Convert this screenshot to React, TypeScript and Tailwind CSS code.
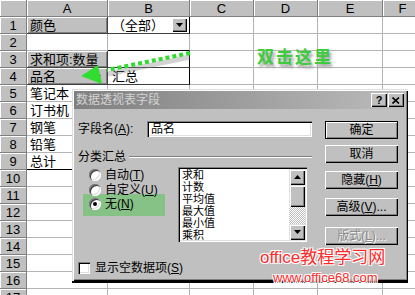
import type { ReactNode } from 'react';

const font = "font-['Liberation_Sans','Noto_Sans_CJK_SC',sans-serif]";

const colLetters = ['A', 'B', 'C', 'D', 'E', 'F'];
const colW = ['w-[81px]', 'w-[82px]', 'w-[64px]', 'w-[64px]', 'w-[65px]', 'w-[40px]'];

const aCells: Record<number, { text: string; gray?: boolean; arrow?: boolean }> = {
  1: { text: '颜色', gray: true },
  3: { text: '求和项:数量', gray: true },
  4: { text: '品名', gray: true, arrow: true },
  5: { text: '笔记本' },
  6: { text: '订书机' },
  7: { text: '钢笔' },
  8: { text: '铅笔' },
  9: { text: '总计' },
};

const listItems = ['求和', '计数', '平均值', '最大值', '最小值', '乘积'];

function DownTri({ className = '' }: { className?: string }) {
  return (
    <svg width="7" height="4" viewBox="0 0 7 4" className={className}>
      <polygon points="0,0 7,0 3.5,4" fill="#000" />
    </svg>
  );
}

function CellA({ n }: { n: number }) {
  const c = aCells[n];
  if (c?.gray) {
    return (
      <div className="relative flex w-[81px] shrink-0 items-center border-r border-b border-[#404040] bg-[#c0c0c0] pl-[3px] shadow-[inset_1px_1px_0_#fff,inset_-1px_-1px_0_#808080]">
        {c.text}
        {c.arrow && <DownTri className="absolute right-[6px] top-[7px]" />}
      </div>
    );
  }
  return (
    <div
      className={`flex w-[81px] shrink-0 items-center border-r border-b pl-[3px] ${
        n === 9 ? 'border-b-black border-r-[#b4b4b4]' : 'border-[#b4b4b4]'
      }`}
    >
      {c?.text}
    </div>
  );
}

function CellB({ n }: { n: number }) {
  const dark = n === 1 || n === 3 || n === 4;
  return (
    <div
      className={`relative flex w-[82px] shrink-0 items-center border-r border-b pl-[4px] ${
        dark ? 'border-r-black border-b-[#404040]' : 'border-[#b4b4b4]'
      } ${n === 2 ? 'border-b-black' : ''}`}
    >
      {n === 1 && (
        <>
          （全部）
          <div className="absolute right-[2px] top-[1px] flex h-[14px] w-[15px] items-center justify-center bg-[#c0c0c0] shadow-[inset_1px_1px_0_#fff,inset_-1px_-1px_0_#000,inset_-2px_-2px_0_#808080]">
            <DownTri />
          </div>
        </>
      )}
      {n === 4 && '汇总'}
    </div>
  );
}

function Btn({ children, def, disabled, className = '' }: { children: ReactNode; def?: boolean; disabled?: boolean; className?: string }) {
  return (
    <div
      className={`flex h-[18px] w-[73px] items-center justify-center bg-[#c0c0c0] text-[12px] ${
        def
          ? 'border border-black shadow-[inset_1px_1px_0_#fff,inset_-1px_-1px_0_#808080]'
          : 'shadow-[inset_1px_1px_0_#fff,inset_-1px_-1px_0_#000,inset_-2px_-2px_0_#808080]'
      } ${disabled ? 'text-[#888] [text-shadow:1px_1px_0_#fff]' : 'text-black'} ${className}`}
    >
      {children}
    </div>
  );
}

function Radio({ checked }: { checked?: boolean }) {
  return (
    <span className="relative inline-block h-[12px] w-[12px] shrink-0 rounded-full bg-white shadow-[inset_1px_1px_0_#808080,inset_2px_2px_0_#404040,inset_-1px_-1px_0_#fff,inset_-2px_-2px_0_#dfdfdf]">
      {checked && <span className="absolute left-[4px] top-[4px] h-[4px] w-[4px] rounded-full bg-black" />}
    </span>
  );
}

const sunken = 'shadow-[inset_1px_1px_0_#808080,inset_2px_2px_0_#000,inset_-1px_-1px_0_#fff,inset_-2px_-2px_0_#dfdfdf]';
const raised = 'bg-[#c0c0c0] shadow-[inset_1px_1px_0_#dfdfdf,inset_2px_2px_0_#fff,inset_-1px_-1px_0_#000,inset_-2px_-2px_0_#808080]';

function Dialog() {
  return (
    <div className={`absolute left-[72px] top-[89px] h-[194px] w-[336px] ${raised} border-b-2 border-black ${font} text-[12px] text-black`}>
      {/* title bar */}
      <div className="mx-[2px] mt-[2px] flex h-[18px] items-center bg-gradient-to-r from-[#808080] to-[#bcbcbc] pl-[2px] pr-[2px]">
        <span className="flex-1 text-[12px] text-[#d4d4d4]">数据透视表字段</span>
        <div className="flex h-[14px] w-[16px] items-center justify-center bg-[#c0c0c0] text-[11px] leading-none font-bold shadow-[inset_1px_1px_0_#fff,inset_-1px_-1px_0_#000,inset_-2px_-2px_0_#808080]">
          ?
        </div>
        <div className="ml-[1px] flex h-[14px] w-[16px] items-center justify-center bg-[#c0c0c0] shadow-[inset_1px_1px_0_#fff,inset_-1px_-1px_0_#000,inset_-2px_-2px_0_#808080]">
          <svg width="8" height="7" viewBox="0 0 8 7">
            <path d="M0.5 0.5 L7 6.5 M7 0.5 L0.5 6.5" stroke="#000" strokeWidth="1.6" />
          </svg>
        </div>
      </div>

      <div className="flex pl-[6px] pt-[12px]">
        {/* left column */}
        <div className="w-[234px]">
          <div className="flex h-[16px] items-center">
            <span className="w-[69px]">
              字段名(<u>A</u>):
            </span>
            <div className={`flex h-[16px] flex-1 items-center bg-white pl-[4px] ${sunken}`}>品名</div>
          </div>

          <div className="mt-[13px] flex h-[14px] items-center">
            <span>分类汇总</span>
            <div className="ml-[3px] h-[2px] flex-1 border-t border-b border-t-[#808080] border-b-white" />
          </div>

          <div className="mt-[3px] flex">
            <div className="ml-[5px] w-[82px]">
              <div className="flex h-[15px] items-center gap-[4px] pl-[6px]">
                <Radio />
                <span>
                  自动(<u>T</u>)
                </span>
              </div>
              <div className="flex h-[15px] items-center gap-[4px] pl-[6px]">
                <Radio />
                <span>
                  自定义(<u>U</u>)
                </span>
              </div>
              <div className="-mt-[3px] flex h-[22px] items-center gap-[4px] bg-[#86c286] pb-[2px] pl-[6px]">
                <Radio checked />
                <span>
                  无(<u>N</u>)
                </span>
              </div>
            </div>

            <div className={`ml-[13px] flex h-[75px] w-[129px] bg-white p-[2px] ${sunken}`}>
              <div className="flex-1 overflow-hidden pl-[2px] text-[11px] leading-[12px]">
                {listItems.map((it) => (
                  <div key={it} className="h-[12px]">
                    {it}
                  </div>
                ))}
              </div>
              <div className="flex w-[16px] flex-col">
                <div className="flex h-[16px] items-center justify-center bg-[#c0c0c0] shadow-[inset_1px_1px_0_#dfdfdf,inset_2px_2px_0_#fff,inset_-1px_-1px_0_#000,inset_-2px_-2px_0_#808080]">
                  <svg width="7" height="4" viewBox="0 0 7 4">
                    <polygon points="3.5,0 7,4 0,4" fill="#000" />
                  </svg>
                </div>
                <div className="h-[22px] bg-[#c0c0c0] shadow-[inset_1px_1px_0_#dfdfdf,inset_2px_2px_0_#fff,inset_-1px_-1px_0_#000,inset_-2px_-2px_0_#808080]" />
                <div className="flex-1 [background-image:repeating-conic-gradient(#c0c0c0_0%_25%,#ffffff_0%_50%)] [background-size:2px_2px]" />
                <div className="flex h-[16px] items-center justify-center bg-[#c0c0c0] shadow-[inset_1px_1px_0_#dfdfdf,inset_2px_2px_0_#fff,inset_-1px_-1px_0_#000,inset_-2px_-2px_0_#808080]">
                  <DownTri />
                </div>
              </div>
            </div>
          </div>

          <div className="mt-[19px] flex h-[14px] items-center gap-[5px]">
            <span className={`h-[12px] w-[12px] bg-white ${sunken}`} />
            <span>
              显示空数据项(<u>S</u>)
            </span>
          </div>
        </div>

        {/* buttons */}
        <div className="ml-[13px] flex flex-col">
          <Btn def>确定</Btn>
          <Btn className="mt-[6px]">取消</Btn>
          <Btn className="mt-[8px]">
            隐藏(<u>H</u>)
          </Btn>
          <Btn className="mt-[9px]">
            高级(<u>V</u>)...
          </Btn>
          <Btn className="mt-[11px]" disabled>
            版式(<u>L</u>)...
          </Btn>
        </div>
      </div>
    </div>
  );
}

export default function App() {
  return (
    <div className={`relative h-[295px] w-[415px] overflow-hidden bg-white ${font} text-[13px] leading-none text-black`}>
      {/* sheet */}
      <div className="flex h-[17px]">
        <div className="w-[27px] shrink-0 border-r border-b border-[#808080] bg-[#c0c0c0] shadow-[inset_1px_1px_0_#fff]" />
        {colLetters.map((l, i) => (
          <div
            key={l}
            className={`flex ${colW[i]} shrink-0 items-center justify-center border-r border-b border-[#808080] bg-[#c0c0c0] text-[13px] shadow-[inset_1px_1px_0_#fff]`}
          >
            {l}
          </div>
        ))}
      </div>
      {Array.from({ length: 17 }, (_, i) => i + 1).map((n) => (
        <div key={n} className="flex h-[17px]">
          <div className="flex w-[27px] shrink-0 items-center justify-center border-r border-b border-[#808080] bg-[#c0c0c0] text-[13px] shadow-[inset_1px_1px_0_#fff]">
            {n}
          </div>
          <CellA n={n} />
          <CellB n={n} />
          <div className="w-[64px] shrink-0 border-r border-b border-[#b4b4b4]" />
          <div className="w-[64px] shrink-0 border-r border-b border-[#b4b4b4]" />
          <div className="w-[65px] shrink-0 border-r border-b border-[#b4b4b4]" />
          <div className="w-[40px] shrink-0 border-r border-b border-[#b4b4b4]" />
        </div>
      ))}

      {/* annotation */}
      <div className="absolute left-[257px] top-[49px] text-[17px] font-bold tracking-[2px] text-[#3ccc3c] [text-shadow:2px_3px_3px_#9a9a9a]">
        双击这里
      </div>
      <svg className="pointer-events-none absolute left-0 top-0" width="415" height="295">
        <line x1="190" y1="57" x2="108" y2="74" stroke="#808080" strokeOpacity="0.35" strokeWidth="5" />
        <line x1="190" y1="53" x2="107" y2="70" stroke="#2fdc2f" strokeWidth="4" strokeDasharray="4 3" />
        <polygon points="81,76 98,65 102,84" fill="#2fdc2f" />
      </svg>

      <Dialog />

      {/* watermark */}
      <div className="absolute left-[260px] top-[249px] text-[17px] leading-none text-[#ff2b2b] [text-shadow:1px_1px_0_#fff,-1px_-1px_0_#fff,1px_-1px_0_#fff,-1px_1px_0_#fff]">
        office教程学习网
      </div>
      <div className="absolute left-[273px] top-[271px] font-['Liberation_Sans',sans-serif] text-[13px] leading-none text-[#ff2b2b] [text-shadow:1px_1px_0_#fff,-1px_-1px_0_#fff,1px_-1px_0_#fff,-1px_1px_0_#fff]">
        www.office68.com
      </div>
    </div>
  );
}
